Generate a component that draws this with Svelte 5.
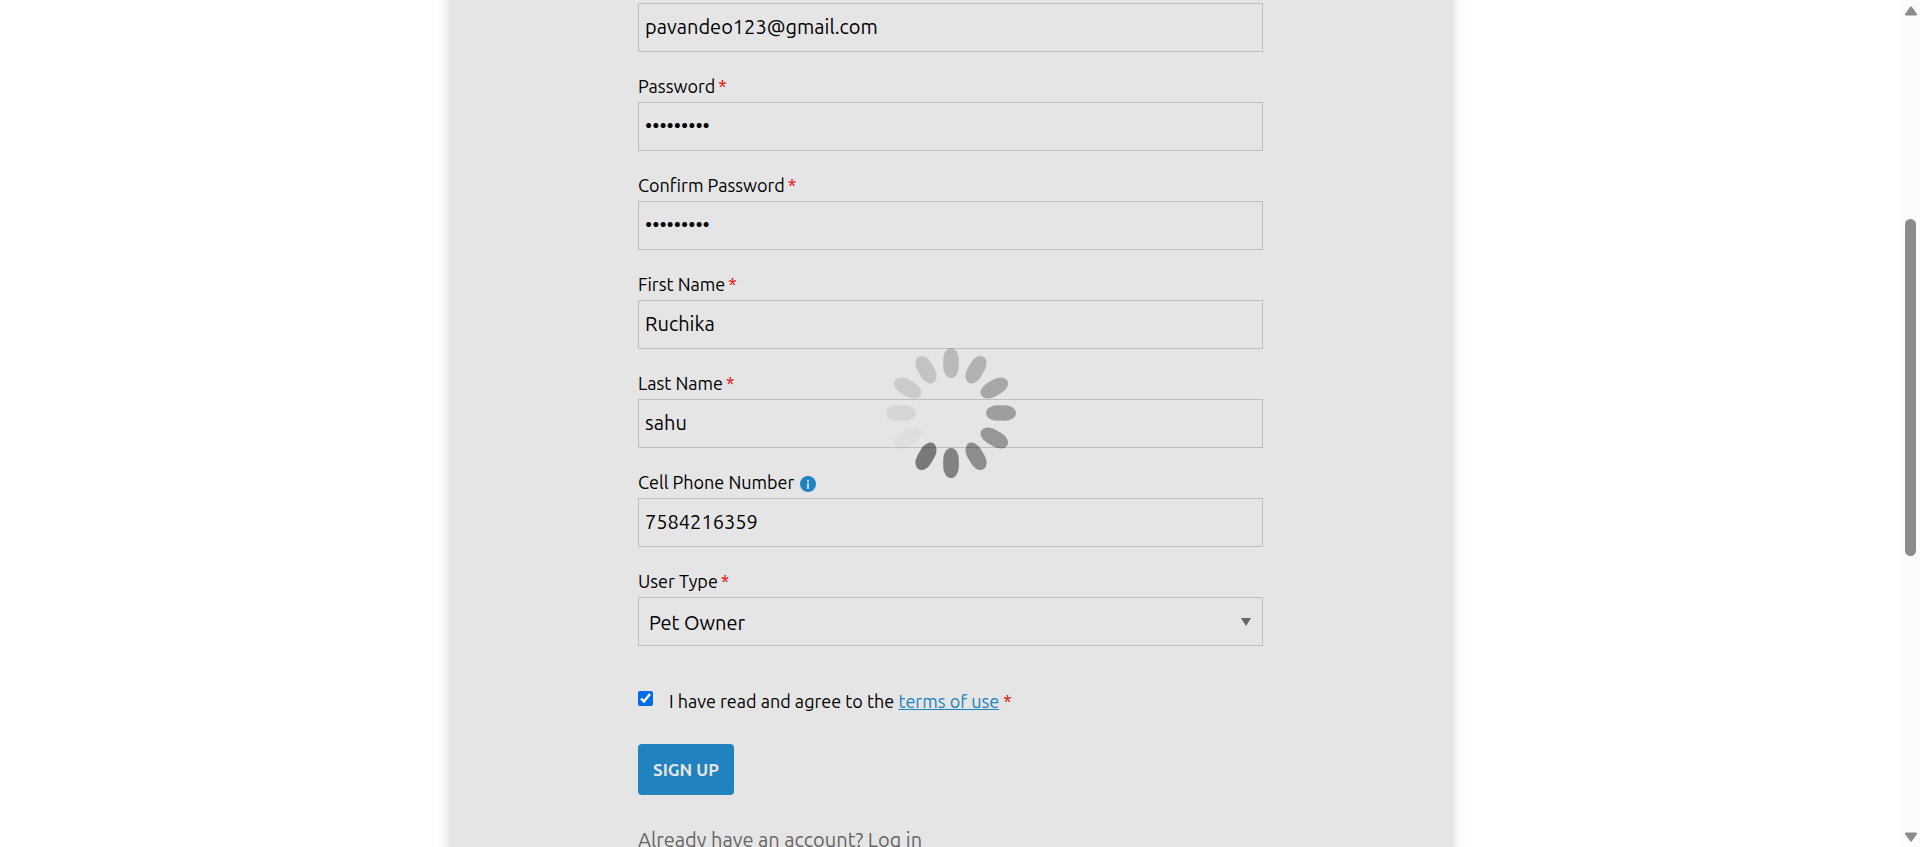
<script>
  const fields = [
    { id: 'email', label: '', type: 'email', value: 'pavandeo123@gmail.com', required: true },
    { id: 'password', label: 'Password', type: 'password', value: 'ruchika12', required: true },
    { id: 'confirm', label: 'Confirm Password', type: 'password', value: 'ruchika12', required: true },
    { id: 'first', label: 'First Name', type: 'text', value: 'Ruchika', required: true },
    { id: 'last', label: 'Last Name', type: 'text', value: 'sahu', required: true },
    { id: 'phone', label: 'Cell Phone Number', type: 'tel', value: '7584216359', required: false, info: true }
  ];
  // Petal opacities, clockwise from twelve o'clock
  const petals = [0.183, 0.225, 0.27, 0.31, 0.34, 0.384, 0.43, 0.47, 0.026, 0.065, 0.11, 0.148];
</script>

<div class="window">
  <div class="page">
    <main class="panel">
      <form class="form" onsubmit={(e) => e.preventDefault()}>
        {#each fields as f}
          <div class="field">
            {#if f.label}
              <label for={f.id}>
                <span>{f.label}</span>
                {#if f.required}<span class="star">*</span>{/if}
                {#if f.info}
                  <svg class="info" viewBox="0 0 16 16" aria-hidden="true">
                    <circle cx="8" cy="8" r="8" fill="#2082be" />
                    <path d="M7 4h2v2H7zM7 7h2v6H7z" fill="#c4d6e0" />
                  </svg>
                {/if}
              </label>
            {/if}
            <input
              id={f.id}
              class="box"
              type={f.type}
              value={f.value}
              aria-label={f.label ? undefined : 'Email'}
              autocomplete="off"
            />
          </div>
        {/each}

        <div class="field">
          <label for="usertype"><span>User Type</span> <span class="star">*</span></label>
          <div class="pick">
            <select id="usertype" class="box">
              <option>Pet Owner</option>
            </select>
            <svg class="caret" viewBox="0 0 10 8" aria-hidden="true"><path d="M0 0h10L5 8z" fill="#666" /></svg>
          </div>
        </div>

        <div class="terms">
          <input id="agree" type="checkbox" checked />
          <label for="agree">I have read and agree to the <a href="#terms">terms of use</a> <span class="star">*</span></label>
        </div>

        <button class="submit" type="submit">SIGN UP</button>

        <p class="login">Already have an account? <a href="#login">Log in</a></p>
      </form>
    </main>

    <div class="overlay">
      <svg class="spinner" viewBox="-65 -65 130 130" role="img" aria-label="Loading">
        {#each petals as opacity, i}
          <rect x="-7.8" y="-65" width="15.6" height="30" rx="7.8" ry="11.5" fill-opacity={opacity} transform="rotate({i * 30})" />
        {/each}
      </svg>
    </div>
  </div>

  <div class="scrollbar" aria-hidden="true">
    <svg viewBox="0 0 12 10"><path d="M6 1.2 L11 8.4 H1z" /></svg>
    <div class="track"><div class="thumb"></div></div>
    <svg viewBox="0 0 12 10"><path d="M6 8.8 L11 1.6 H1z" /></svg>
  </div>
</div>

<style>
  :global(body) {
    margin: 0;
    background: #fff;
  }
  .window {
    display: flex;
    height: 100vh;
    overflow: hidden;
    font-family: Ubuntu, 'Noto Sans', sans-serif;
    font-size: 18px;
    line-height: 24px;
    color: #000;
  }
  .page {
    position: relative;
    flex: 1;
    min-width: 0;
    display: flex;
    justify-content: center;
  }
  .panel {
    box-sizing: border-box;
    width: 100%;
    max-width: 1002px;
    margin: -24px 0;
    padding: 24px 0;
    display: flex;
    justify-content: center;
    background: #e5e5e5;
    box-shadow: 0 0 12px rgba(0, 0, 0, 0.2);
  }
  .form {
    width: 100%;
    max-width: 625px;
    padding-top: 3px;
  }
  .field {
    margin-bottom: 22px;
  }
  .field label {
    display: flex;
    align-items: center;
    gap: 3px;
    height: 24px;
    padding-bottom: 4px;
  }
  .star {
    color: #e60000;
  }
  .info {
    width: 16px;
    height: 16px;
    margin: 3px 0 0 3px;
  }
  .box {
    display: block;
    box-sizing: border-box;
    width: 100%;
    height: 49px;
    margin: 0;
    padding: 0 6px 2px;
    border: 1px solid #bebebe;
    border-radius: 0;
    background: transparent;
    color: #000;
    font-family: inherit;
    font-size: 20px;
    outline: none;
    appearance: none;
  }
  .pick {
    position: relative;
  }
  select.box {
    padding: 2px 10px 0;
  }
  .caret {
    position: absolute;
    right: 12px;
    top: 21px;
    width: 10px;
    height: 8px;
    pointer-events: none;
  }
  .terms {
    display: flex;
    align-items: flex-start;
    gap: 16px;
    margin-top: 45px;
    line-height: 20px;
  }
  .terms input {
    width: 15px;
    height: 15px;
    margin: 0;
    accent-color: #006be6;
  }
  a {
    color: #2082be;
  }
  .submit {
    display: block;
    height: 51px;
    margin-top: 33px;
    padding: 0 15px;
    border: 0;
    border-radius: 4px;
    background: #2082be;
    color: #e5e5e5;
    font-family: inherit;
    font-size: 17px;
    font-weight: 700;
  }
  .login {
    margin: 33px 0 0;
    color: #666;
    font-size: 20px;
  }
  .login a {
    color: inherit;
    text-decoration: none;
  }
  .overlay {
    position: absolute;
    inset: 0;
    display: flex;
    align-items: center;
    justify-content: center;
    padding-bottom: 22px;
    pointer-events: none;
  }
  .spinner {
    width: 130px;
    height: 130px;
  }
  .scrollbar {
    box-sizing: border-box;
    width: 19px;
    padding: 6px 0 5px;
    display: flex;
    flex-direction: column;
    align-items: center;
    background: #fcfcfc;
  }
  .scrollbar svg {
    width: 12px;
    height: 10px;
    fill: #8b8b8b;
    stroke: #8b8b8b;
    stroke-width: 2;
    stroke-linejoin: round;
  }
  .track {
    flex: 1;
    width: 11px;
    display: flex;
    flex-direction: column;
  }
  .track::before {
    content: '';
    flex: 203;
  }
  .track::after {
    content: '';
    flex: 276;
  }
  .thumb {
    flex: 337;
    border-radius: 6px;
    background: #8b8b8b;
  }
</style>
